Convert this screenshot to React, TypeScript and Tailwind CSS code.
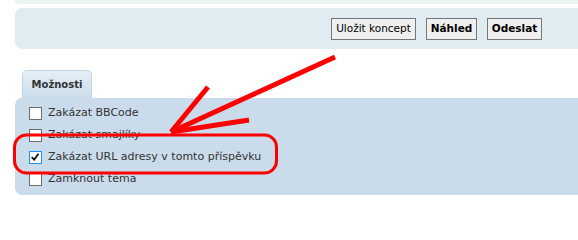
import React from "react";

const font = { fontFamily: "Verdana, 'DejaVu Sans', sans-serif" };

function Box({ checked }: { checked?: boolean }) {
  return (
    <span
      className={`relative inline-block w-[13px] h-[13px] bg-white border shrink-0 ${
        checked ? "border-[#1e90ff]" : "border-[#6d6d6d]"
      }`}
    >
      {checked && (
        <svg viewBox="0 0 13 13" className="absolute left-0 top-0 w-[11px] h-[11px]">
          <path d="M2 6 L5 9 L10 2" fill="none" stroke="#111" strokeWidth="2" />
        </svg>
      )}
    </span>
  );
}

export default function App() {
  const rows = [
    { t: "Zakázat BBCode" },
    { t: "Zakázat smajlíky" },
    { t: "Zakázat URL adresy v tomto příspěvku", c: true },
    { t: "Zamknout téma" },
  ];
  return (
    <div className="relative w-[578px] h-[206px] bg-white overflow-hidden" style={font}>
      <div className="pl-[15px]">
        <div className="h-[4px] bg-[#ecf1f3] rounded-bl-[7px]" />
        <div className="mt-[4px] h-[41px] bg-[#e1ebf2] rounded-l-[7px] flex items-center justify-end pr-[36px] gap-[10px]">
          <button className="w-[85px] h-[22px] bg-[#efefef] border border-[#767676] text-[10.5px] text-black leading-none">
            Uložit koncept
          </button>
          <button className="w-[51px] h-[22px] bg-[#efefef] border border-[#767676] text-[10.5px] font-bold text-black leading-none">
            Náhled
          </button>
          <button className="w-[55px] h-[22px] bg-[#efefef] border border-[#767676] text-[10.5px] font-bold text-black leading-none">
            Odeslat
          </button>
        </div>
        <div className="mt-[21px] pl-[7px] flex">
          <div className="w-[70px] h-[28px] rounded-t-[5px] border border-b-0 border-[#c3d5e4] bg-gradient-to-b from-[#e6eff6] to-[#cadceb] flex items-center justify-center text-[10px] font-bold text-[#333]">
            Možnosti
          </div>
        </div>
        <div className="h-[97px] bg-[#cadceb] rounded-l-[7px] pt-[4px] pl-[14px] flex flex-col">
          {rows.map((r) => (
            <div key={r.t} className="h-[22px] flex items-center gap-[6px] text-[11px] text-[#333]">
              <Box checked={r.c} />
              <span>{r.t}</span>
            </div>
          ))}
        </div>
      </div>
      <svg className="absolute left-0 top-0 pointer-events-none" width="578" height="206">
        <rect x="14.5" y="135" width="262" height="38" rx="12" fill="none" stroke="#ff0000" strokeWidth="3" />
        <line x1="335" y1="57" x2="171" y2="132" stroke="#ff0000" strokeWidth="5" />
        <line x1="208" y1="87" x2="171" y2="132" stroke="#ff0000" strokeWidth="5" />
        <line x1="249" y1="120" x2="171" y2="132" stroke="#ff0000" strokeWidth="5" />
      </svg>
    </div>
  );
}
